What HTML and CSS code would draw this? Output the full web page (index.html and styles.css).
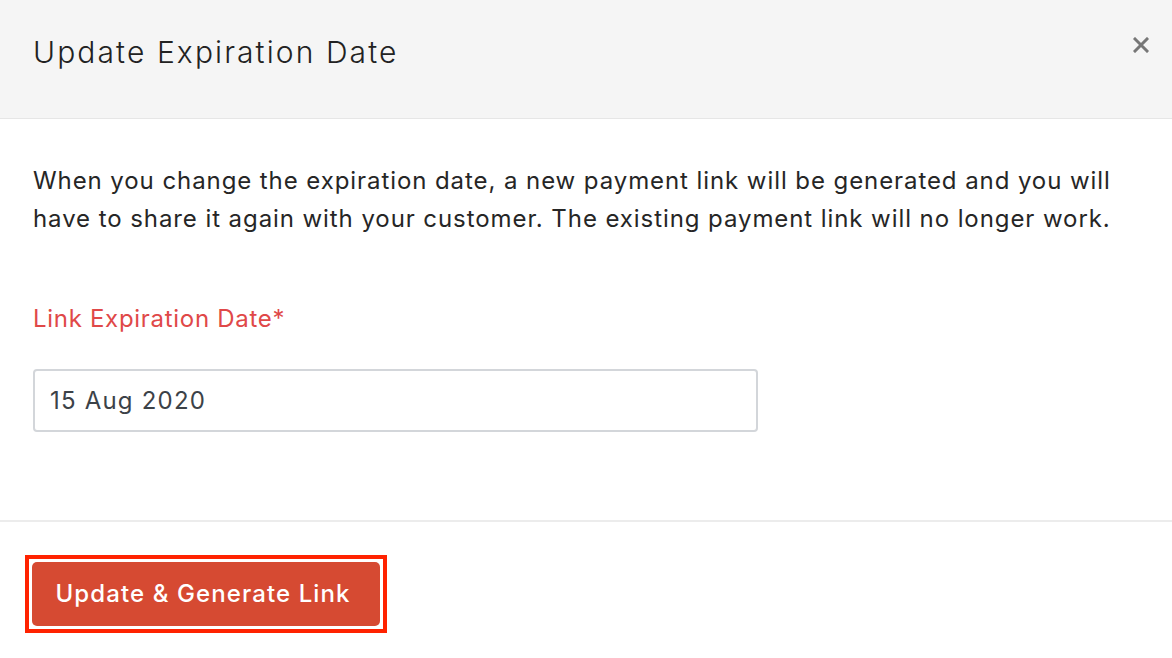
FILE: index.html
```html
<!DOCTYPE html>
<html>
<head>
<meta charset="utf-8">
<link rel="stylesheet" href="styles.css">
</head>
<body>
<div class="modal">
  <header class="modal-header">
    <h1 class="title">Update Expiration Date</h1>
    <button class="close" aria-label="Close">
      <svg width="16" height="16" viewBox="0 0 16 16"><path d="M2 2 L14 14 M14 2 L2 14" stroke="#777" stroke-width="3" stroke-linecap="square"/></svg>
    </button>
  </header>
  <section class="modal-body">
    <p class="desc">When you change the expiration date, a new payment link will be generated and you will have to share it again with your customer. The existing payment link will no longer work.</p>
    <label class="label">Link Expiration Date*</label>
    <div class="input">15 Aug 2020</div>
  </section>
  <footer class="modal-footer">
    <div class="highlight">
      <button class="btn">Update &amp; Generate Link</button>
    </div>
  </footer>
</div>
</body>
</html>
```
FILE: styles.css
```css
* { box-sizing: border-box; }
html, body { margin: 0; padding: 0; background: #fff; }
body { font-family: Inter, "Open Sans", sans-serif; color: #222; width: 1172px; height: 658px; overflow: hidden; }
.modal { display: flex; flex-direction: column; }
.modal-header {
  height: 119px;
  background: #f5f5f5;
  border-bottom: 1px solid #e6e6e6;
  display: flex;
  align-items: center;
  justify-content: space-between;
  padding: 0 23px 0 33px;
}
.title { margin: 0; font-weight: 300; font-size: 30px; letter-spacing: 2.1px; color: #222; padding-bottom: 15px; }
.close { border: 0; background: none; padding: 0; width: 16px; height: 16px; margin-bottom: 28px; display: flex; }
.modal-body { padding: 42px 33px 88px; display: flex; flex-direction: column; }
.desc { margin: 0; font-size: 24px; letter-spacing: 0.92px; line-height: 38px; color: #262626; width: 1105px; padding-top: 1px; }
.label { margin-top: 62px; font-size: 24px; letter-spacing: 0.7px; line-height: 38px; color: #e04848; }
.input {
  margin-top: 31px;
  width: 725px; height: 63px;
  border: 2px solid #d3d6da;
  border-radius: 4px;
  padding-left: 15px;
  display: flex; align-items: center;
  font-size: 24px; letter-spacing: 1.2px; color: #3c4248;
}
.modal-footer { border-top: 2px solid #ececec; padding: 33px 0 0 25px; }
.highlight { display: inline-block; border: 4px solid #ff2200; padding: 3px; }
.btn {
  display: block;
  width: 348px; height: 64px;
  background: #d64a32;
  border: 0; border-radius: 5px;
  color: #fff;
  font-family: Inter, "Open Sans", sans-serif;
  font-size: 24px; font-weight: 500; letter-spacing: 1.1px;
  padding: 0 6px 2px 0;
}
```
